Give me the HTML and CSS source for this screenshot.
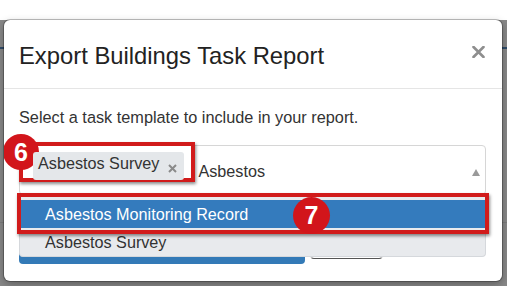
FILE: index.html
```html
<!DOCTYPE html>
<html lang="en">
<head>
    <meta charset="UTF-8">
    <title>Export Buildings Task Report</title>
    <link rel="stylesheet" href="styles.css">
</head>
<body>
    <div class="top-band"></div>

    <div class="backdrop">
        <div class="modal">
            <div class="modal-header">
                <h4 class="modal-title">Export Buildings Task Report</h4>
                <svg class="close" width="13" height="12" viewBox="0 0 13 12">
                    <path d="M1.5 1 L11.5 11 M11.5 1 L1.5 11" stroke="#8e8e8e" stroke-width="2.6" stroke-linecap="round"/>
                </svg>
            </div>

            <div class="modal-body">
                <p class="intro">Select a task template to include in your report.</p>

                <div class="select-wrap">
                    <div class="mark mark-tag"></div>
                    <div class="badge badge-six">6</div>

                    <div class="select">
                        <span class="tag">
                            <span class="tag-label">Asbestos Survey</span>
                            <svg class="tag-remove" width="9" height="9" viewBox="0 0 9 9">
                                <path d="M1 1 L8 8 M8 1 L1 8" stroke="#8a8a8a" stroke-width="2"/>
                            </svg>
                        </span>
                        <span class="search">Asbestos</span>
                        <svg class="arrow" width="8" height="7" viewBox="0 0 8 7">
                            <path d="M4 0 L8 7 L0 7 Z" fill="#9a9a9a"/>
                        </svg>
                    </div>

                    <ul class="dropdown">
                        <li class="option highlighted">Asbestos Monitoring Record</li>
                        <li class="option">Asbestos Survey</li>
                    </ul>

                    <!-- markering rundt valgt alternativ -->
                    <div class="mark mark-option"></div>
                    <div class="badge badge-seven">7</div>
                </div>

                <div class="actions">
                    <button class="btn btn-primary"></button>
                    <button class="btn btn-default"></button>
                </div>
            </div>
        </div>
    </div>
</body>
</html>
```

FILE: styles.css
```css
body {
    margin: 0;
    width: 507px;
    height: 286px;
    overflow: hidden;
    background-color: #fff;
    font-family: "Liberation Sans", Arial, sans-serif;
    color: #333;
}
.top-band {
    height: 20px;
    background-color: #fff;
}
.backdrop {
    height: 266px;
    box-sizing: border-box;
    padding: 0 5px 0 4px;
    background: linear-gradient(to bottom,
        #888 0, #888 27px,
        #2f4b69 27px, #2f4b69 29px,
        #888 29px, #888 202px,
        #7b7b7b 202px, #7b7b7b 203px,
        #888 203px);
}
.modal {
    height: 261px;
    background-color: #fff;
    border-radius: 6px;
    overflow: hidden;
    box-shadow: 0 0 0 1px rgba(0, 0, 0, 0.25), 0 3px 8px rgba(0, 0, 0, 0.3);
}
.modal-header {
    display: flex;
    justify-content: space-between;
    align-items: flex-start;
    padding: 22px 17px 18px 15px;
    border-bottom: 1px solid #e5e5e5;
}
.modal-title {
    margin: 0;
    font-size: 23.8px;
    line-height: 28px;
    font-weight: normal;
    color: #222;
}
.close {
    margin-top: 4px;
}
.modal-body {
    padding: 18px 16px 0 15px;
}
.intro {
    margin: 0;
    font-size: 16.3px;
    line-height: 20px;
    color: #333;
}
.select-wrap {
    position: relative;
    margin-top: 18px;
}
.select {
    display: flex;
    align-items: flex-start;
    height: 50px;
    box-sizing: border-box;
    padding: 6px 5px 0 13px;
    border: 1px solid #d6d6d6;
    border-radius: 4px;
    background-color: #fff;
}
.tag {
    position: relative;
    z-index: 3;
    display: flex;
    align-items: flex-start;
    height: 28px;
    padding: 0 7px 0 5px;
    background-color: #e4e7ea;
    border-radius: 3px;
    font-size: 16.2px;
}
.tag-label {
    line-height: 23px;
}
.tag-remove {
    margin: 12px 0 0 9px;
}
.search {
    margin: 9px 0 0 14px;
    font-size: 16.2px;
    line-height: 20px;
}
.arrow {
    margin: 17px 0 0 auto;
}
.dropdown {
    position: absolute;
    top: 50px;
    left: 0;
    right: 0;
    z-index: 3;
    margin: 0;
    padding: 5px 0 0 0;
    list-style: none;
    background-color: #e8eaed;
    border: 1px solid #d5d8dc;
    border-top: none;
    border-radius: 0 0 4px 4px;
}
.option {
    height: 28px;
    line-height: 28px;
    padding-left: 25px;
    font-size: 16.2px;
    color: #333;
}
.option.highlighted {
    background-color: #347bbd;
    color: #fff;
}
.mark {
    position: absolute;
    box-sizing: border-box;
    border: 4px solid #d11b1b;
    box-shadow: 1px 2px 3px rgba(0, 0, 0, 0.45);
}
.mark-tag {
    z-index: 1;
    left: 0;
    top: -3px;
    width: 176px;
    height: 40px;
}
.mark-option {
    z-index: 4;
    left: -2px;
    top: 48px;
    width: 472px;
    height: 41px;
}
.badge {
    position: absolute;
    display: flex;
    align-items: center;
    justify-content: center;
    border-radius: 50%;
    background-color: #d2151b;
    color: #fff;
    font-weight: bold;
    font-size: 25px;
}
.badge-six {
    z-index: 2;
    left: -16px;
    top: -11px;
    width: 36px;
    height: 36px;
}
.badge-seven {
    z-index: 5;
    left: 274px;
    top: 52px;
    width: 37px;
    height: 37px;
}
.actions {
    display: flex;
    align-items: flex-start;
    gap: 5px;
    margin-top: 35px;
}
.btn {
    padding: 0;
    border-radius: 4px;
}
.btn-primary {
    width: 286px;
    height: 34px;
    border: none;
    background-color: #337ab7;
}
.btn-default {
    width: 73px;
    height: 29px;
    border: 1px solid #ccc;
    border-bottom-color: #555;
    background-color: #fff;
}
```
